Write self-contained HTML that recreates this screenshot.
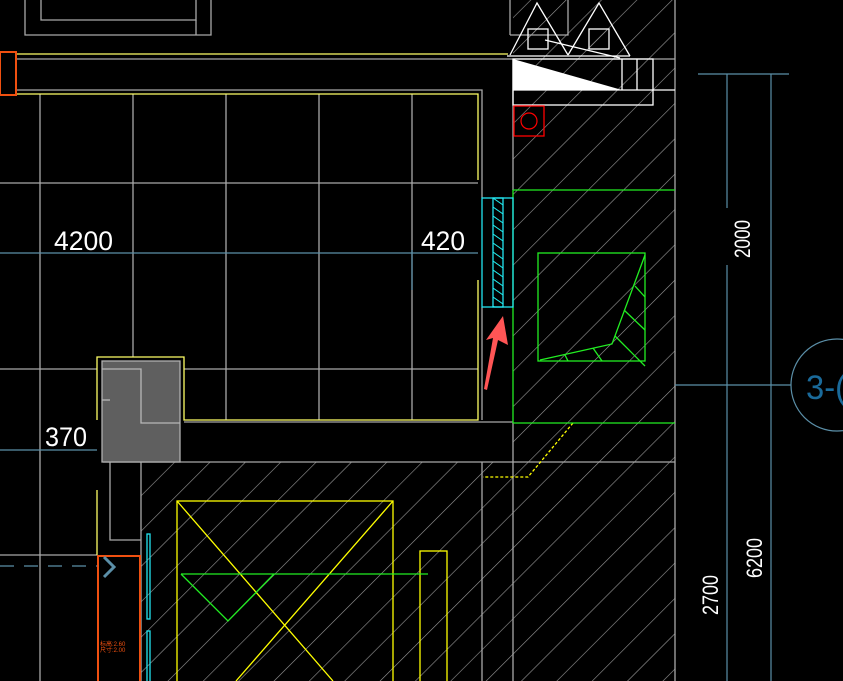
<!DOCTYPE html>
<html><head><meta charset="utf-8"><style>
html,body{margin:0;padding:0;background:#000;overflow:hidden}
svg{display:block}
text{font-family:"Liberation Sans",sans-serif}
</style></head><body>
<svg width="843" height="681" viewBox="0 0 843 681" xmlns="http://www.w3.org/2000/svg">
<defs>
<pattern id="h" width="25" height="25" patternUnits="userSpaceOnUse" patternTransform="rotate(45)">
<line x1="0" y1="0" x2="0" y2="25" stroke="#9a9a9a" stroke-width="1.2"/>
</pattern>
<pattern id="c" width="10" height="9" patternUnits="userSpaceOnUse" x="493" y="198">
<line x1="0" y1="0" x2="10" y2="7" stroke="#2ee" stroke-width="1"/>
</pattern>
</defs>
<rect width="843" height="681" fill="#000"/>
<rect x="513" y="0" width="162" height="681" fill="url(#h)"/>
<rect x="141" y="462" width="372" height="219" fill="url(#h)"/>
<rect x="0" y="0" width="508" height="54" fill="#000"/>

<g fill="none" stroke="#a8a8a8" stroke-width="1.3">
<polyline points="25,0 25,35 211,35 211,0"/>
<polyline points="41,0 41,20 196,20 196,0"/>
<polyline points="196,20 196,35"/>
<polyline points="510,35 510,0"/><polyline points="568,0 568,35 510,35"/>
<line x1="17" y1="59" x2="675" y2="59"/>
<polyline points="17,90 482,90 482,198"/>
<line x1="482" y1="307" x2="482" y2="420"/>
<line x1="40" y1="94" x2="40" y2="681"/>
<line x1="133" y1="94" x2="133" y2="357"/>
<line x1="226" y1="94" x2="226" y2="420"/>
<line x1="319" y1="94" x2="319" y2="420"/>
<line x1="412" y1="94" x2="412" y2="420"/>
<line x1="0" y1="183" x2="478" y2="183"/>
<line x1="0" y1="369" x2="97" y2="369"/>
<line x1="184" y1="369" x2="478" y2="369"/>
<line x1="0" y1="555" x2="97" y2="555"/>
<line x1="513" y1="59" x2="513" y2="190"/>
<line x1="513" y1="423" x2="513" y2="681"/>
<line x1="675" y1="0" x2="675" y2="681"/>
<line x1="184" y1="422" x2="513" y2="422"/>
<line x1="103" y1="462" x2="675" y2="462"/>
<line x1="482" y1="462" x2="482" y2="681"/>
<line x1="141" y1="462" x2="141" y2="681"/>
<polyline points="110,400 110,540 141,540"/>
</g>
<rect x="102" y="361" width="78" height="101" fill="#5f5f5f" stroke="#b0b0b0" stroke-width="1.3"/>
<polyline points="102,369 141,369 141,423 180,423" fill="none" stroke="#b8b8b8" stroke-width="1.3"/>
<polyline points="102,400 110,400" fill="none" stroke="#b8b8b8" stroke-width="1.3"/>
<g fill="none" stroke="#ffff66" stroke-width="1.3">
<line x1="17" y1="54" x2="508" y2="54"/>
<polyline points="17,94 478,94 478,180"/>
<polyline points="478,280 478,420 184,420 184,357 97,357 97,420"/>
<line x1="97" y1="490" x2="97" y2="555"/>
</g>
<g fill="none" stroke="#ffff00" stroke-width="1.3">
<rect x="177" y="501" width="216" height="190"/>
<line x1="177" y1="501" x2="333" y2="681"/>
<line x1="393" y1="501" x2="236" y2="681"/>
<rect x="420" y="551" width="27" height="140"/>
<polyline points="573,423 528,477 483,477" stroke-dasharray="3,2"/>
</g>
<g fill="none" stroke="#22ee22" stroke-width="1.3">
<line x1="513" y1="190" x2="675" y2="190"/>
<line x1="513" y1="190" x2="513" y2="423"/>
<line x1="513" y1="423" x2="675" y2="423"/>
<rect x="538" y="253" width="107" height="108"/>
<polyline points="540,360 612,344 645,255"/>
<line x1="615" y1="336" x2="645" y2="366"/>
<line x1="624" y1="310" x2="645" y2="330"/>
<line x1="635" y1="286" x2="645" y2="297"/>
<line x1="593" y1="348" x2="602" y2="361"/>
<line x1="565" y1="355" x2="568" y2="361"/>
<line x1="181" y1="574" x2="428" y2="574"/>
<polyline points="181,574 228,621 274,574"/>
</g>
<g fill="none" stroke="#22e5f0" stroke-width="1.3">
<rect x="482" y="198" width="31" height="109"/>
<rect x="493" y="198" width="10" height="109" fill="url(#c)"/>
<rect x="147" y="534" width="3" height="85"/>
<rect x="147" y="631" width="3" height="55"/>
</g>
<g fill="none" stroke="#fff" stroke-width="1.3">
<polyline points="510,55 537,3 568,55"/>
<polyline points="568,55 599,3 630,56"/>
<line x1="507" y1="56" x2="630" y2="56"/>
<rect x="528" y="29" width="20" height="20" fill="url(#h)"/>
<rect x="589" y="29" width="20" height="20" fill="url(#h)"/>
<line x1="545" y1="40" x2="620" y2="58"/>
<rect x="513" y="59" width="140" height="46"/>
<line x1="513" y1="90" x2="675" y2="90"/>
<line x1="622" y1="59" x2="622" y2="90"/>
<line x1="637" y1="59" x2="637" y2="90"/>
</g>
<polygon points="513,59 513,90 622,90" fill="#fff"/>
<rect x="514" y="106" width="30" height="30" fill="none" stroke="#f00" stroke-width="1.3"/>
<circle cx="529" cy="121" r="8" fill="none" stroke="#f00" stroke-width="1.2"/>
<rect x="0" y="52" width="16" height="43" fill="none" stroke="#f05010" stroke-width="2"/>
<rect x="98" y="556" width="42" height="127" fill="none" stroke="#f05010" stroke-width="2"/>
<text x="100" y="646" font-size="6" fill="#f05010">标高:2.60</text>
<text x="100" y="652" font-size="6" fill="#f05010">尺寸:2.00</text>
<g fill="none" stroke="#5b8fa8" stroke-width="1.2">
<line x1="0" y1="253" x2="478" y2="253"/>
<line x1="412" y1="250" x2="412" y2="290"/>
<line x1="0" y1="450" x2="97" y2="450"/>
<line x1="0" y1="566" x2="97" y2="566" stroke-dasharray="14,10"/>
<polyline points="104,557 114,567 104,577" stroke-width="3"/>
<line x1="698" y1="74" x2="789" y2="74"/>
<line x1="727" y1="74" x2="727" y2="208"/>
<line x1="727" y1="265" x2="727" y2="681"/>
<line x1="771" y1="74" x2="771" y2="681"/>
<line x1="675" y1="385" x2="791" y2="385"/>
<circle cx="837" cy="385" r="46"/>
</g>
<g fill="#fff" font-size="27" font-weight="100">
<text x="54" y="250" textLength="59" lengthAdjust="spacingAndGlyphs">4200</text>
<text x="421" y="250" textLength="44" lengthAdjust="spacingAndGlyphs">420</text>
<text x="45" y="446" textLength="42" lengthAdjust="spacingAndGlyphs">370</text>
<text transform="translate(750,258) rotate(-90)" font-size="22" textLength="38" lengthAdjust="spacingAndGlyphs">2000</text>
<text transform="translate(762,578) rotate(-90)" font-size="22" textLength="40" lengthAdjust="spacingAndGlyphs">6200</text>
<text transform="translate(718,615) rotate(-90)" font-size="22" textLength="40" lengthAdjust="spacingAndGlyphs">2700</text>
</g>
<text x="806" y="399" font-size="34" fill="#1a6a9a" textLength="40" lengthAdjust="spacingAndGlyphs">3-(</text>
<polygon points="503,316 508,345 498,340 487,390 484,389 493,338 486,340" fill="#ff5555"/>
</svg>
</body></html>
